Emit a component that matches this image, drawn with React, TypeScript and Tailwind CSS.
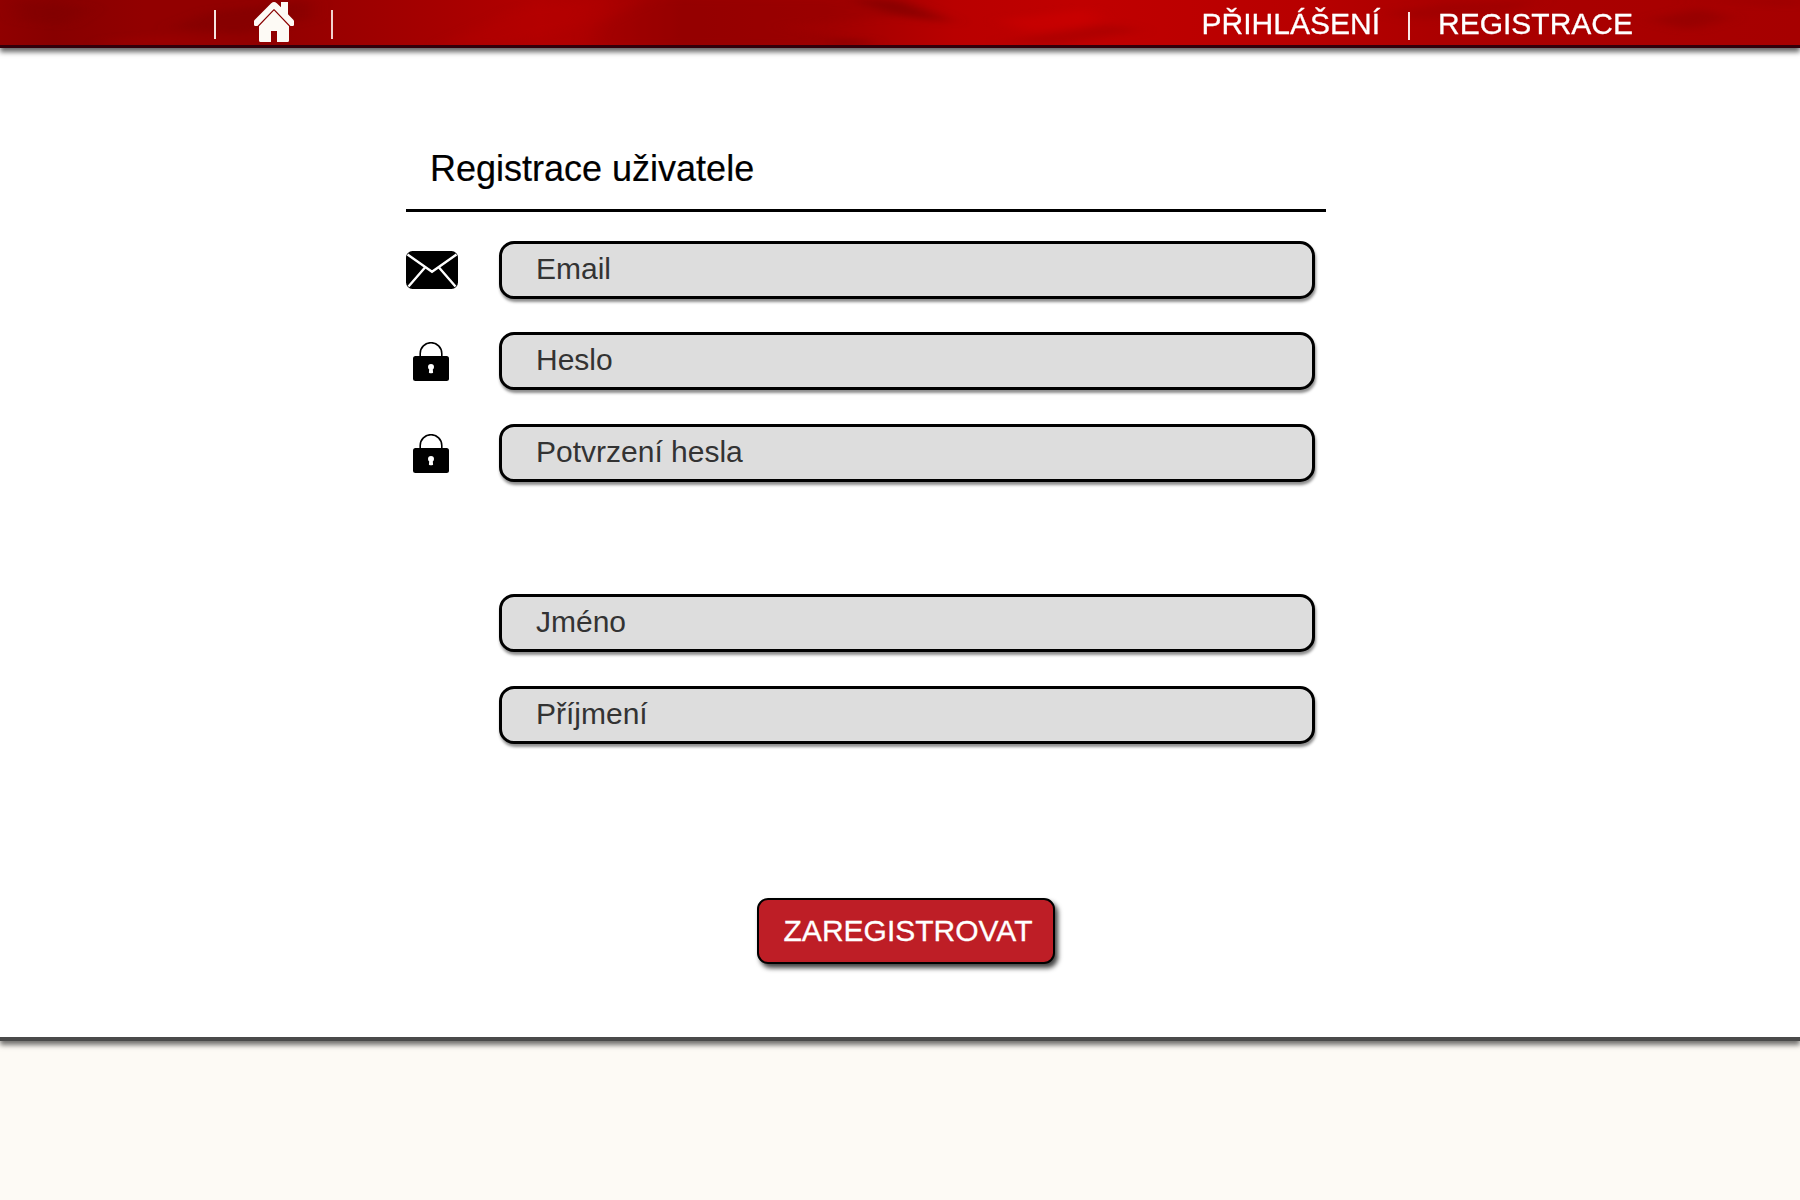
import React from "react";

function HomeIcon() {
  return (
    <svg width="40" height="40" viewBox="0 0 40 40" fill="#fdfaf5">
      <path d="M5 24.2 20 8.6 35 24.2V38.5q0 1.5-1.5 1.5H23V29h-6v11H6.500Q5 40 5 38.500Z" />
      <path d="M17.200 1.200Q20 -1 22.800 1.200L27 5.200V0H34V12.200L39.300 17.700Q40 18.500 40 19.500V23Q40 24 38.500 24H36.500L20.400 7.200H19.600L3.500 24H1.500Q0 24 0 23V19.500Q0 18.500 .8 17.700Z" />
    </svg>
  );
}

function MailIcon() {
  return (
    <svg width="52" height="38" viewBox="0 0 52 38">
      <rect width="52" height="38" rx="6.500" fill="#000" />
      <g fill="none" stroke="#fff" strokeWidth="2.400">
        <path d="M1.500 3.500 26 20.700 50.500 3.500" strokeLinejoin="miter" />
        <path d="M19 16.500 2.500 35.500M33 16.500 49.500 35.500" />
      </g>
    </svg>
  );
}

function LockIcon() {
  return (
    <svg width="36" height="39" viewBox="0 0 36 39">
      <path d="M7.200 15V11.500a10.800 10.800 0 0 1 21.600 0V15" fill="none" stroke="#000" strokeWidth="1.600" />
      <rect y="14" width="36" height="25" rx="2.500" fill="#000" />
      <path d="M18 22a3 3 0 0 0-3 3q0 1.500 1.200 2.500l-.3 3.200q2.100 1 4.200 0l-.3-3.200Q21 26.500 21 25a3 3 0 0 0-3-3Z" fill="#fff" />
    </svg>
  );
}

function SilkTexture() {
  return (
    <svg className="absolute inset-0" width="1800" height="45" viewBox="0 0 1800 45" aria-hidden="true">
      <defs>
        <linearGradient id="silk" x1="0" x2="1800" y1="0" y2="0" gradientUnits="userSpaceOnUse">
          <stop offset="0" stopColor="#900000" />
          <stop offset=".03" stopColor="#880000" />
          <stop offset=".08" stopColor="#920000" />
          <stop offset=".15" stopColor="#920000" />
          <stop offset=".22" stopColor="#a10000" />
          <stop offset=".3" stopColor="#b20000" />
          <stop offset=".335" stopColor="#ad0000" />
          <stop offset=".38" stopColor="#980000" />
          <stop offset=".46" stopColor="#a00000" />
          <stop offset=".53" stopColor="#b90000" />
          <stop offset=".6" stopColor="#c00000" />
          <stop offset=".72" stopColor="#b80000" />
          <stop offset=".8" stopColor="#ab0000" />
          <stop offset="1" stopColor="#a60000" />
        </linearGradient>
        <filter id="soft" x="-20%" y="-60%" width="140%" height="220%">
          <feGaussianBlur stdDeviation="10 3" />
        </filter>
      </defs>
      <rect width="1800" height="45" fill="url(#silk)" />
      <g filter="url(#soft)">
        <path d="M15 0 90 8 65 25 20 20Z" fill="#790000" opacity=".35" />
        <path d="M170 28 210 12 310 0V18L240 34Z" fill="#780000" opacity=".4" />
        <path d="M110 40 170 36 250 45H100Z" fill="#a80000" opacity=".35" />
        <path d="M440 45 520 8 600 0 585 24 500 45Z" fill="#bc0000" opacity=".25" />
        <path d="M600 24 650 0H840L900 16 780 26 870 45H590Z" fill="#900000" opacity=".3" />
        <path d="M845 -2 900 0 955 23 895 15Z" fill="#780000" opacity=".65" />
        <path d="M835 40h30l8 5h-45Z" fill="#780000" opacity=".6" />
        <path d="M1000 42 1110 24 1140 31 1060 45Z" fill="#a00000" opacity=".5" />
        <path d="M1000 20 1090 9 1100 22 1030 32Z" fill="#d40000" opacity=".4" />
        <path d="M1385 13 1450 3 1540 0 1510 12 1420 20Z" fill="#970000" opacity=".5" />
        <path d="M1650 20 1700 8 1730 18 1690 30Z" fill="#8a0000" opacity=".5" />
        <path d="M1680 0h120v5Z" fill="#900000" opacity=".5" />
      </g>
    </svg>
  );
}

function Field({ label, icon }: { label: string; icon?: React.ReactNode }) {
  return (
    <div className="flex h-[58px] items-center">
      <div className="flex w-[93px] shrink-0">{icon}</div>
      <div className="h-[58px] w-[816px] rounded-[15px] border-[3px] border-black bg-[#dddddd] pl-[34px] text-[30px] leading-[50px] text-[#333333] shadow-[1px_3px_3px_rgba(0,0,0,0.45)]">
        {label}
      </div>
    </div>
  );
}

export default function App() {
  return (
    <div className="flex h-[1200px] w-[1800px] flex-col overflow-hidden bg-[#fdfaf5] font-['Liberation_Sans',Arial,sans-serif]">
      <header className="relative z-10 h-12 shrink-0 border-b-[3px] border-[#32000a] shadow-[0_4px_5px_rgba(0,0,0,0.6)]">
        <SilkTexture />
        <div className="relative flex h-[45px] justify-between pr-[167px] pl-[214px] text-[#fdfaf5]">
          <div className="flex">
            <span className="mt-[10px] h-[29px] w-[2px] bg-[#f6e4e0]" />
            <a className="mt-[2px] ml-[38px]"><HomeIcon /></a>
            <span className="mt-[10px] ml-[37px] h-[29px] w-[2px] bg-[#f0d2ce]" />
          </div>
          <nav className="flex text-[30px] leading-[48px] text-white [-webkit-text-stroke:0.3px_white]">
            <a>PŘIHLÁŠENÍ</a>
            <span className="mt-[12px] mr-[28px] ml-[28px] h-[28px] w-[2px] bg-[#fbe8e8]" />
            <a>REGISTRACE</a>
          </nav>
        </div>
      </header>
      <main className="h-[993px] shrink-0 border-b-4 border-[#4a4a4a] bg-white pl-[406px] shadow-[0_4px_5px_rgba(0,0,0,0.55)]">
        <h1 className="h-[164px] w-[920px] border-b-[3px] border-black pt-[100px] pl-[24px] text-[36px] leading-[41px] [-webkit-text-stroke:0.2px_black]">
          Registrace uživatele
        </h1>
        <form className="flex w-[920px] flex-col pt-[29px]">
          <Field label="Email" icon={<MailIcon />} />
          <div className="mt-[33px]"><Field label="Heslo" icon={<span className="ml-[7px]"><LockIcon /></span>} /></div>
          <div className="mt-[34px]"><Field label="Potvrzení hesla" icon={<span className="ml-[7px]"><LockIcon /></span>} /></div>
          <div className="mt-[112px]"><Field label="Jméno" /></div>
          <div className="mt-[34px]"><Field label="Příjmení" /></div>
          <button type="button" className="mt-[154px] ml-[351px] h-[66px] w-[298px] rounded-[11px] border-2 border-black bg-[#be1e26] pl-[4px] text-[30px] leading-[62px] text-white shadow-[3px_4px_5px_rgba(0,0,0,0.75)] [-webkit-text-stroke:0.3px_white]">
            ZAREGISTROVAT
          </button>
        </form>
      </main>
    </div>
  );
}
